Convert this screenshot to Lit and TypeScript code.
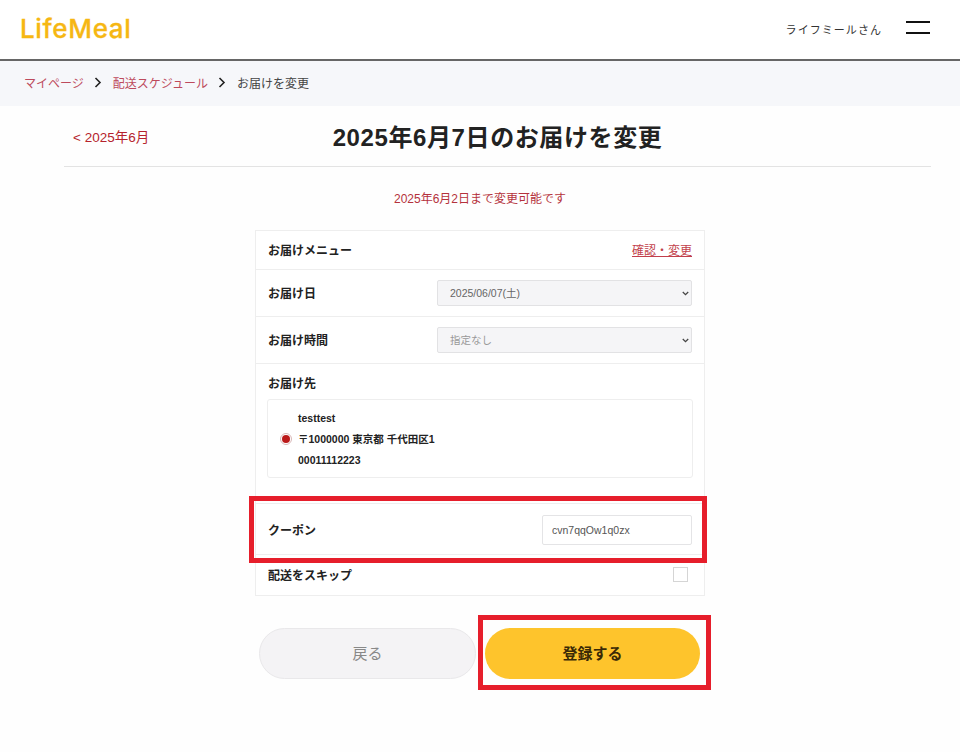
import { LitElement, html, css } from "lit";
import { customElement } from "lit/decorators.js";

@customElement("app-root")
export class AppRoot extends LitElement {
  static styles = css`
    :host {
      display: block;
      width: 960px;
      height: 752px;
      overflow: hidden;
      background: #fefefe;
      color: #222;
      font-family: "Liberation Sans", "Noto Sans CJK JP", sans-serif;
      font-size: 12px;
    }
    * { box-sizing: border-box; }
    .header {
      height: 61px;
      background: #fff;
      border-bottom: 2px solid #666;
      display: flex;
      align-items: center;
      padding: 0 30px 2px 20px;
    }
    .logo {
      font-family: "Inter", sans-serif;
      font-weight: 500;
      font-size: 26px;
      line-height: 1;
      color: #f6b713;
      letter-spacing: 0.65px;
      -webkit-text-stroke: 0.3px #f6b713;
    }
    .user {
      margin-left: auto;
      margin-right: 24px;
      font-size: 11px;
      letter-spacing: 1.05px;
      color: #333;
    }
    .menu {
      width: 24px;
      height: 13px;
      border-top: 2px solid #111;
      border-bottom: 2px solid #111;
      margin-top: -3px;
    }
    .crumbs {
      height: 45px;
      background: #f6f7fa;
      display: flex;
      align-items: center;
      padding: 0 0 2px 24px;
      font-size: 12px;
    }
    .crumbs a { color: #bd4a5c; }
    .crumbs span { color: #444; }
    .chev { width: 8px; height: 11px; margin: 0 11px 0 10px; }
    .title-row {
      margin: 0 29px 0 64px;
      height: 61px;
      border-bottom: 1px solid #e3e3e3;
      display: grid;
      grid-template-columns: 1fr auto 1fr;
      align-items: center;
      padding-bottom: 2px;
    }
    .back-link { color: #b5232d; font-size: 13.5px; padding: 2px 0 0 9px; }
    h1 {
      margin: 0;
      font-size: 24px;
      font-weight: 700;
      letter-spacing: 0.6px;
      color: #222;
    }
    .note {
      text-align: center;
      color: #b5323c;
      font-size: 12px;
      margin: 24px 0 23px;
      line-height: 16px;
    }
    .card {
      position: relative;
      width: 450px;
      margin-left: 255px;
      background: #fff;
      border: 1px solid #eeeeee;
    }
    .row {
      display: flex;
      align-items: center;
      justify-content: space-between;
      padding: 0 12px;
      border-bottom: 1px solid #eeeeee;
      font-weight: 700;
      color: #222;
    }
    .r-menu { height: 39px; padding-bottom: 2px; }
    .r-sel { height: 47px; }
    .r-sel > span { margin-top: -2px; }
    .r-addr { height: 140px; display: block; padding: 13px 11px 0 11px; }
    .r-coupon { height: 51px; }
    .r-skip { height: 40px; border-bottom: 0; }
    .r-skip > span { margin-top: -2px; }
    .confirm {
      font-weight: 400;
      color: #c23f4c;
      text-decoration: underline;
    }
    .select {
      width: 255px;
      height: 26px;
      background: #f5f5f7;
      border: 1px solid #e2e2e4;
      border-radius: 2px;
      display: flex;
      align-items: center;
      justify-content: space-between;
      padding: 0 2px 2px 12px;
      font-size: 10.5px;
      font-weight: 400;
      color: #666;
    }
    .select.dim { color: #999; }
    .select svg { width: 7px; height: 5px; margin-top: 2px; }
    .addr-label { line-height: 14px; padding-left: 1px; }
    .addr-box {
      margin-top: 8px;
      height: 79px;
      border: 1px solid #eee;
      border-radius: 3px;
      display: flex;
      align-items: center;
      padding: 1px 0 0 12px;
      font-size: 10.5px;
    }
    .radio {
      width: 12px;
      height: 12px;
      border-radius: 50%;
      border: 1px solid #d9b7b7;
      display: flex;
      align-items: center;
      justify-content: center;
      margin-right: 6px;
      flex: none;
    }
    .radio i { width: 8px; height: 8px; border-radius: 50%; background: #bb1a1a; }
    .lines div { line-height: 21px; }
    .input {
      width: 150px;
      height: 30px;
      margin-top: 2px;
      border: 1px solid #e4e4e6;
      border-radius: 2px;
      display: flex;
      align-items: center;
      padding-left: 9px;
      font-size: 10.5px;
      font-weight: 400;
      color: #555;
    }
    .check {
      width: 15px;
      height: 15px;
      border: 1px solid #d5d5d5;
      margin-right: 4px;
      margin-top: -2px;
    }
    .actions {
      position: relative;
      display: flex;
      gap: 9px;
      margin: 32px 0 0 259px;
      width: 441px;
    }
    .btn {
      flex: 1;
      height: 51px;
      border-radius: 26px;
      display: flex;
      align-items: center;
      justify-content: center;
      padding-bottom: 3px;
      font-size: 15px;
    }
    .btn.back {
      background: #f4f3f5;
      border: 1px solid #e9e8ea;
      color: #888;
    }
    .btn.go {
      background: #fec42c;
      color: #3a2a06;
      font-weight: 700;
    }
    .mark {
      position: absolute;
      border: 5px solid #e61e2b;
      pointer-events: none;
    }
    .m-coupon { left: -7px; top: 265px; width: 458px; height: 67px; }
    .m-go { left: 219px; top: -13px; width: 233px; height: 75px; }
  `;

  render() {
    return html`
      <div class="header">
        <div class="logo">LifeMeal</div>
        <div class="user">ライフミールさん</div>
        <div class="menu"></div>
      </div>
      <div class="crumbs">
        <a>マイページ</a>
        <svg class="chev" viewBox="0 0 8 11"><path d="M1.5 1l4.5 4.5-4.5 4.5" fill="none" stroke="#222" stroke-width="1.6"/></svg>
        <a>配送スケジュール</a>
        <svg class="chev" viewBox="0 0 8 11"><path d="M1.5 1l4.5 4.5-4.5 4.5" fill="none" stroke="#222" stroke-width="1.6"/></svg>
        <span>お届けを変更</span>
      </div>
      <div class="title-row">
        <div class="back-link">&lt; 2025年6月</div>
        <h1>2025年6月7日のお届けを変更</h1>
        <div></div>
      </div>
      <div class="note">2025年6月2日まで変更可能です</div>
      <div class="card">
        <div class="row r-menu"><span>お届けメニュー</span><a class="confirm">確認・変更</a></div>
        <div class="row r-sel"><span>お届け日</span>
          <div class="select"><span>2025/06/07(土)</span>${this.arrow()}</div></div>
        <div class="row r-sel"><span>お届け時間</span>
          <div class="select dim"><span>指定なし</span>${this.arrow()}</div></div>
        <div class="row r-addr">
          <div class="addr-label">お届け先</div>
          <div class="addr-box">
            <div class="radio"><i></i></div>
            <div class="lines">
              <div>testtest</div>
              <div>〒1000000 東京都 千代田区1</div>
              <div>00011112223</div>
            </div>
          </div>
        </div>
        <div class="row r-coupon"><span>クーポン</span><div class="input">cvn7qqOw1q0zx</div></div>
        <div class="row r-skip"><span>配送をスキップ</span><div class="check"></div></div>
        <div class="mark m-coupon"></div>
      </div>
      <div class="actions">
        <div class="btn back">戻る</div>
        <div class="btn go">登録する</div>
        <div class="mark m-go"></div>
      </div>
    `;
  }

  arrow() {
    return html`<svg viewBox="0 0 9 6"><path d="M1 1l3.5 3.5L8 1" fill="none" stroke="#444" stroke-width="1.6"/></svg>`;
  }
}
